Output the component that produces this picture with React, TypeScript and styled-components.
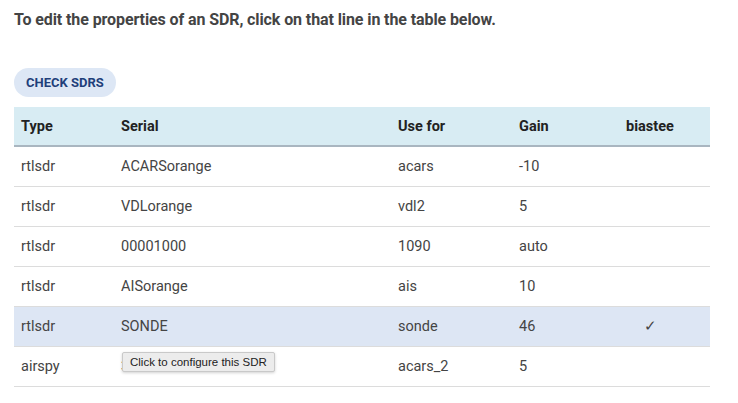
import React from "react";
import styled, { createGlobalStyle } from "styled-components";

const Global = createGlobalStyle`
  html, body { margin: 0; padding: 0; background: #fff; }
  body { font-family: Roboto, "Noto Sans", Arial, sans-serif; }
  * { box-sizing: border-box; }
`;

const Page = styled.div`
  padding: 10px 28px 0 14px;
  width: 738px;
`;

const Intro = styled.p`
  margin: 0;
  font-size: 16px;
  font-weight: 700;
  color: #444;
  line-height: 20px;
  letter-spacing: -0.1px;
`;

const Button = styled.button`
  display: block;
  margin-top: 38px;
  height: 29px;
  padding: 0 12px;
  border: none;
  border-radius: 15px;
  background: #dde7f5;
  color: #1f3f7a;
  font-family: Roboto, sans-serif;
  font-size: 13px;
  font-weight: 700;
  cursor: pointer;
`;

const Table = styled.table`
  margin-top: 10px;
  width: 696px;
  border-collapse: collapse;
  table-layout: fixed;
  font-size: 14.5px;
`;

const Th = styled.th<{ $w: number; $center?: boolean }>`
  width: ${(p) => p.$w}px;
  height: 39px;
  padding: 0 7px;
  background: #d8ecf3;
  border-bottom: 2px solid #a9b6c0;
  text-align: ${(p) => (p.$center ? "center" : "left")};
  font-weight: 700;
  color: #222;
`;

const Row = styled.tr<{ $active?: boolean }>`
  background: ${(p) => (p.$active ? "#dde6f4" : "#fff")};
`;

const Td = styled.td<{ $center?: boolean }>`
  position: relative;
  height: 40px;
  padding: 0 7px;
  border-bottom: 1px solid #dcdcdc;
  color: #444;
  text-align: ${(p) => (p.$center ? "center" : "left")};
`;

const Tip = styled.div`
  position: absolute;
  left: 8px;
  top: 5px;
  padding: 2px 7px;
  background: #ececec;
  border: 1px solid #c9c9c9;
  border-radius: 2px;
  box-shadow: 0 1px 3px rgba(0, 0, 0, 0.18);
  font-family: "Liberation Sans", Arial, sans-serif;
  font-size: 11.5px;
  color: #222;
  white-space: nowrap;
  line-height: 14px;
`;

const rows = [
  { type: "rtlsdr", serial: "ACARSorange", use: "acars", gain: "-10", bias: false },
  { type: "rtlsdr", serial: "VDLorange", use: "vdl2", gain: "5", bias: false },
  { type: "rtlsdr", serial: "00001000", use: "1090", gain: "auto", bias: false },
  { type: "rtlsdr", serial: "AISorange", use: "ais", gain: "10", bias: false },
  { type: "rtlsdr", serial: "SONDE", use: "sonde", gain: "46", bias: true },
  { type: "airspy", serial: "35A36C82E2C4C04F", use: "acars_2", gain: "5", bias: false },
];

export default function App() {
  return (
    <>
      <Global />
      <Page>
        <Intro>To edit the properties of an SDR, click on that line in the table below.</Intro>
        <Button>CHECK SDRS</Button>
        <Table>
          <thead>
            <tr>
              <Th $w={100}>Type</Th>
              <Th $w={277}>Serial</Th>
              <Th $w={121}>Use for</Th>
              <Th $w={78}>Gain</Th>
              <Th $w={120} $center>biastee</Th>
            </tr>
          </thead>
          <tbody>
            {rows.map((r, i) => (
              <Row key={i} $active={r.bias}>
                <Td>{r.type}</Td>
                <Td>
                  {r.serial}
                  {i === rows.length - 1 && <Tip>Click to configure this SDR</Tip>}
                </Td>
                <Td>{r.use}</Td>
                <Td>{r.gain}</Td>
                <Td $center>{r.bias ? "✓" : ""}</Td>
              </Row>
            ))}
          </tbody>
        </Table>
      </Page>
    </>
  );
}
